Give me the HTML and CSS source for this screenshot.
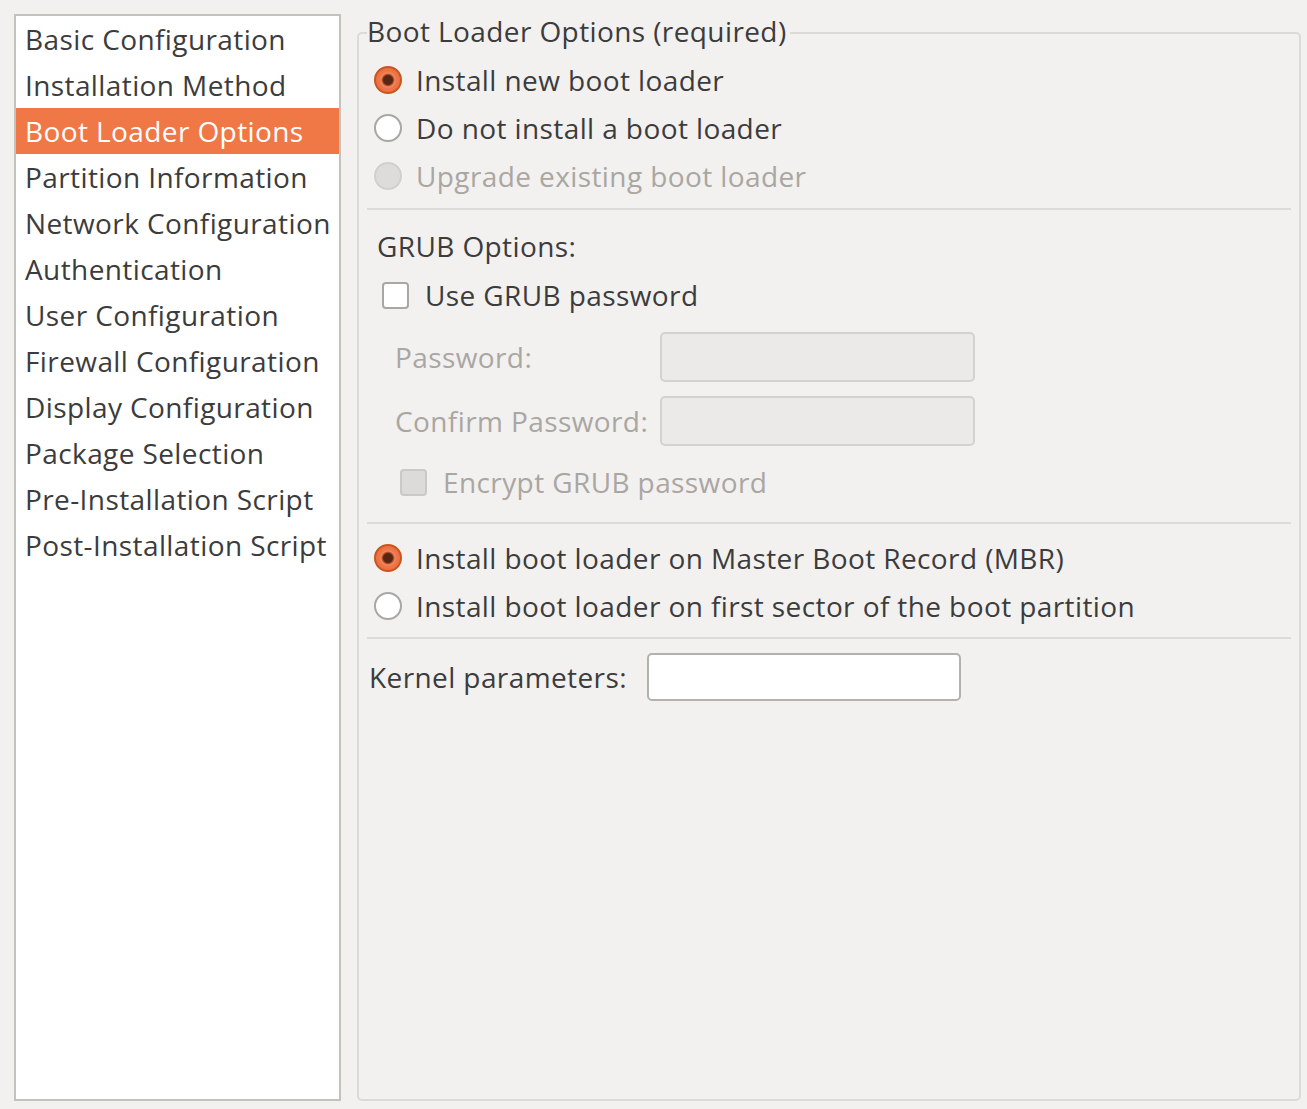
FILE: index.html
```html
<!DOCTYPE html>
<html>
<head>
<meta charset="utf-8">
<link rel="stylesheet" href="styles.css">
</head>
<body>
<div class="dialog">
  <ul class="sidebar">
    <li class="item">Basic Configuration</li>
    <li class="item">Installation Method</li>
    <li class="item selected">Boot Loader Options</li>
    <li class="item">Partition Information</li>
    <li class="item">Network Configuration</li>
    <li class="item">Authentication</li>
    <li class="item">User Configuration</li>
    <li class="item">Firewall Configuration</li>
    <li class="item">Display Configuration</li>
    <li class="item">Package Selection</li>
    <li class="item">Pre-Installation Script</li>
    <li class="item">Post-Installation Script</li>
  </ul>
  <fieldset class="frame">
    <legend class="legend">Boot Loader Options (required)</legend>
    <div class="content">
      <div class="row radio-row first"><span class="radio checked"></span><span class="label">Install new boot loader</span></div>
      <div class="row radio-row"><span class="radio"></span><span class="label">Do not install a boot loader</span></div>
      <div class="row radio-row"><span class="radio disabled"></span><span class="label muted">Upgrade existing boot loader</span></div>
      <div class="sep sep1"></div>
      <div class="row grub-title">GRUB Options:</div>
      <div class="row check-row"><span class="check"></span><span class="label">Use GRUB password</span></div>
      <div class="row field-row pw1"><span class="field-label muted">Password:</span><span class="input disabled"></span></div>
      <div class="row field-row pw2"><span class="field-label muted">Confirm Password:</span><span class="input disabled"></span></div>
      <div class="row encrypt-row"><span class="check disabled"></span><span class="label muted">Encrypt GRUB password</span></div>
      <div class="sep sep2"></div>
      <div class="row radio-row mbr"><span class="radio checked"></span><span class="label">Install boot loader on Master Boot Record (MBR)</span></div>
      <div class="row radio-row"><span class="radio"></span><span class="label">Install boot loader on first sector of the boot partition</span></div>
      <div class="sep sep3"></div>
      <div class="row kernel-row"><span class="kernel-label">Kernel parameters:</span><span class="input"></span></div>
    </div>
  </fieldset>
</div>
</body>
</html>
```
FILE: styles.css
```css
html, body {
  margin: 0;
  padding: 0;
  background: #f2f1f0;
}
body {
  font-family: "Open Sans", "DejaVu Sans", sans-serif;
  font-size: 28px;
  letter-spacing: 0.4px;
  color: #3c3c3c;
}
.dialog {
  display: flex;
  align-items: flex-start;
  padding: 14px 6px 0 14px;
  gap: 16px;
}
.sidebar {
  box-sizing: border-box;
  width: 327px;
  height: 1087px;
  margin: 0;
  padding: 0;
  list-style: none;
  background: #ffffff;
  border: 2px solid #c4c2bd;
}
.item {
  height: 46px;
  line-height: 46px;
  padding-left: 9px;
  white-space: nowrap;
}
.item.selected {
  background: #f07746;
  color: #ffffff;
}
.frame {
  box-sizing: border-box;
  width: 944px;
  height: 1083px;
  margin: 4px 0 0 0;
  padding: 0 8px;
  border: 2px solid #dcdad6;
  border-radius: 5px;
  min-width: 0;
}
.legend {
  padding: 0 3px 0 0;
  line-height: 26px;
  height: 30px;
}
.content {
  display: flex;
  flex-direction: column;
}
.row {
  display: flex;
  align-items: center;
  white-space: nowrap;
}
.radio-row {
  height: 48px;
  padding-left: 7px;
}
.radio-row.first {
  margin-top: 8px;
}
.radio {
  box-sizing: border-box;
  flex: none;
  width: 28px;
  height: 28px;
  border-radius: 50%;
  border: 2px solid #a9a7a4;
  background: #ffffff;
  margin-right: 14px;
}
.radio.checked {
  border-color: #c9561f;
  background: radial-gradient(circle, #5a2614 0, #5a2614 4.5px, #a94a26 5.5px, #f28b5f 7px, #ee7648 8.5px, #e8683a 100%);
}
.radio.disabled {
  border-color: #d2d0cd;
  background: #dddcda;
}
.muted {
  color: #aaa6a2;
}
.sep {
  height: 2px;
  background: #dddbd7;
}
.sep1 { margin-top: 8px; }
.sep2 { margin-top: 18px; }
.sep3 { margin-top: 7px; }
.grub-title {
  height: 40px;
  margin-top: 16px;
  padding-left: 10px;
}
.check-row {
  height: 46px;
  margin-top: 6px;
  padding-left: 15px;
}
.check {
  box-sizing: border-box;
  flex: none;
  width: 27px;
  height: 27px;
  border: 2px solid #a9a7a4;
  border-radius: 4px;
  background: #ffffff;
  margin-right: 16px;
}
.check.disabled {
  border-color: #cbc9c6;
  background: #dcdbd9;
}
.field-row {
  height: 50px;
  margin-top: 14px;
  padding-left: 28px;
}
.field-label {
  width: 265px;
  flex: none;
}
.input {
  box-sizing: border-box;
  flex: none;
  width: 315px;
  height: 50px;
  border: 2px solid #b4b1ad;
  border-radius: 5px;
  background: #ffffff;
}
.input.disabled {
  border-color: #d4d2ce;
  background: #ebeae8;
}
.encrypt-row {
  height: 44px;
  margin-top: 14px;
  padding-left: 33px;
}
.radio-row.mbr {
  margin-top: 10px;
}
.kernel-row {
  height: 48px;
  margin-top: 14px;
  padding-left: 2px;
}
.kernel-label {
  width: 278px;
  flex: none;
}
.kernel-row .input {
  width: 314px;
  height: 48px;
}
```
